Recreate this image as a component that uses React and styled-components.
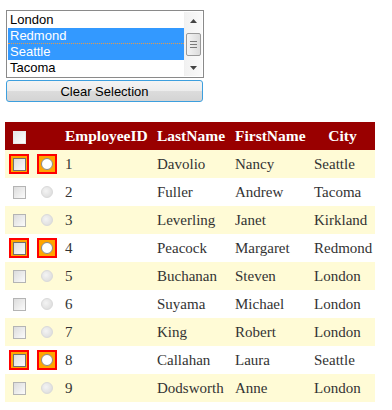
import styled, { createGlobalStyle } from "styled-components";

const GlobalStyle = createGlobalStyle`
  body {
    margin: 0;
    background: #fff;
    font-family: "Liberation Serif", "Times New Roman", serif;
  }
`;

const Page = styled.div`
  padding: 10px 0 0 5px;
`;

const ListBox = styled.div`
  margin-left: 1px;
  width: 198px;
  height: 68px;
  box-sizing: border-box;
  border: 1px solid #8a8a8a;
  padding: 1px;
  background: #fff;
  display: flex;
`;

const Options = styled.ul`
  flex: 1;
  margin: 0;
  padding: 0;
  list-style: none;
  font-family: "Liberation Sans", Arial, sans-serif;
  font-size: 13px;
`;

const Option = styled.li`
  height: 16px;
  line-height: 16px;
  padding-left: 2px;
  box-sizing: border-box;
  color: ${(p) => (p.$selected ? "#fff" : "#000")};
  background: ${(p) => (p.$selected ? "#3399ff" : "transparent")};
  border-bottom: ${(p) => (p.$focused ? "1px dotted #e09a50" : "none")};
`;

const ScrollBar = styled.div`
  width: 17px;
  background: linear-gradient(to right, #f2f2f2, #fafafa);
  display: flex;
  flex-direction: column;
  align-items: center;
  border-left: 1px solid #f0f0f0;
`;

const Arrow = styled.div`
  height: 17px;
  width: 17px;
  display: flex;
  align-items: center;
  justify-content: center;
`;

const Track = styled.div`
  flex: 1;
  width: 100%;
  display: flex;
  flex-direction: column;
  justify-content: center;
`;

const Thumb = styled.div`
  margin: 0 1px;
  height: 21px;
  border: 1px solid #9a9a9a;
  border-radius: 2px;
  background: linear-gradient(to right, #f4f4f4, #dcdcdc);
  display: flex;
  flex-direction: column;
  align-items: center;
  justify-content: center;
  gap: 2px;
`;

const Grip = styled.span`
  width: 7px;
  height: 1px;
  background: #7a7a7a;
`;

const ClearButton = styled.button`
  display: block;
  margin: 2px 0 0 1px;
  width: 197px;
  height: 22px;
  border: 1px solid #3d9fde;
  border-radius: 3px;
  background: linear-gradient(#f4f4f4 0%, #ececec 50%, #dcdcdc 51%, #d4d4d4 100%);
  font-family: "Liberation Sans", Arial, sans-serif;
  font-size: 13px;
  color: #000;
  padding: 0;
`;

const Grid = styled.table`
  margin-top: 20px;
  border-collapse: collapse;
  table-layout: fixed;
  width: 370px;
  color: #333;
  font-size: 15px;
`;

const HeadCell = styled.th`
  height: 28px;
  padding: 0 0 0 ${(p) => (p.$center ? 0 : 4)}px;
  background: #990000;
  color: #fff;
  font-size: 15.5px;
  font-weight: bold;
  text-align: ${(p) => (p.$center ? "center" : "left")};
  white-space: nowrap;
`;

const Row = styled.tr`
  background: ${(p) => (p.$alt ? "#fff" : "#fffbd6")};
`;

const Cell = styled.td`
  height: 28px;
  padding: 0 0 0 ${(p) => (p.$box ? 0 : 4)}px;
  white-space: nowrap;
  text-align: ${(p) => (p.$box ? "center" : "left")};
  vertical-align: middle;
`;

const Mark = styled.span`
  display: inline-flex;
  align-items: center;
  justify-content: center;
  vertical-align: middle;
  width: 20px;
  height: 20px;
  box-sizing: border-box;
  border: ${(p) => (p.$hot ? "2px solid #ff0000" : "none")};
  background: ${(p) => (p.$hot ? "#ffa500" : "transparent")};
`;

const CheckBox = styled.span`
  display: block;
  width: 13px;
  height: 13px;
  box-sizing: border-box;
  border: 1px solid ${(p) => (p.$hot ? "#6f6f6f" : "#b4b4b4")};
  background: linear-gradient(135deg, #dcdcdc, #fbfbfb);
`;

const HeadBox = styled.span`
  display: inline-block;
  vertical-align: middle;
  width: 13px;
  height: 13px;
  box-sizing: border-box;
  border: 1px solid #e8e8e8;
  background: linear-gradient(135deg, #e4e4e4, #fff);
`;

const Radio = styled.span`
  display: block;
  width: 12px;
  height: 12px;
  border-radius: 50%;
  box-sizing: border-box;
  border: 1px solid ${(p) => (p.$hot ? "#8a8a8a" : "#dadada")};
  background: ${(p) =>
    p.$hot ? "#fff" : "radial-gradient(circle at 40% 40%, #f4f4f4, #d8d8d8)"};
`;

const cities = [
  { name: "London" },
  { name: "Redmond", selected: true, focused: true },
  { name: "Seattle", selected: true },
  { name: "Tacoma" },
];

const employees = [
  [1, "Davolio", "Nancy", "Seattle", true],
  [2, "Fuller", "Andrew", "Tacoma"],
  [3, "Leverling", "Janet", "Kirkland"],
  [4, "Peacock", "Margaret", "Redmond", true],
  [5, "Buchanan", "Steven", "London"],
  [6, "Suyama", "Michael", "London"],
  [7, "King", "Robert", "London"],
  [8, "Callahan", "Laura", "Seattle", true],
  [9, "Dodsworth", "Anne", "London"],
];

const Triangle = ({ up }) => (
  <svg width="7" height="4" viewBox="0 0 7 4">
    <path d={up ? "M0 4 L3.5 0 L7 4 Z" : "M0 0 L3.5 4 L7 0 Z"} fill="#444" />
  </svg>
);

const App = () => (
  <Page>
    <GlobalStyle />
    <ListBox>
      <Options>
        {cities.map((c) => (
          <Option key={c.name} $selected={c.selected} $focused={c.focused}>
            {c.name}
          </Option>
        ))}
      </Options>
      <ScrollBar>
        <Arrow>
          <Triangle up />
        </Arrow>
        <Track>
          <Thumb>
            <Grip />
            <Grip />
            <Grip />
          </Thumb>
        </Track>
        <Arrow>
          <Triangle />
        </Arrow>
      </ScrollBar>
    </ListBox>
    <ClearButton>Clear Selection</ClearButton>
    <Grid>
      <colgroup>
        <col style={{ width: 28 }} />
        <col style={{ width: 28 }} />
        <col style={{ width: 92 }} />
        <col style={{ width: 78 }} />
        <col style={{ width: 79 }} />
        <col style={{ width: 65 }} />
      </colgroup>
      <thead>
        <tr>
          <HeadCell $center>
            <HeadBox />
          </HeadCell>
          <HeadCell />
          <HeadCell>EmployeeID</HeadCell>
          <HeadCell>LastName</HeadCell>
          <HeadCell>FirstName</HeadCell>
          <HeadCell $center>City</HeadCell>
        </tr>
      </thead>
      <tbody>
        {employees.map(([id, last, first, city, hot], i) => (
          <Row key={id} $alt={i % 2 === 1}>
            <Cell $box>
              <Mark $hot={hot}>
                <CheckBox $hot={hot} />
              </Mark>
            </Cell>
            <Cell $box>
              <Mark $hot={hot}>
                <Radio $hot={hot} />
              </Mark>
            </Cell>
            <Cell>{id}</Cell>
            <Cell>{last}</Cell>
            <Cell>{first}</Cell>
            <Cell>{city}</Cell>
          </Row>
        ))}
      </tbody>
    </Grid>
  </Page>
);

export default App;
